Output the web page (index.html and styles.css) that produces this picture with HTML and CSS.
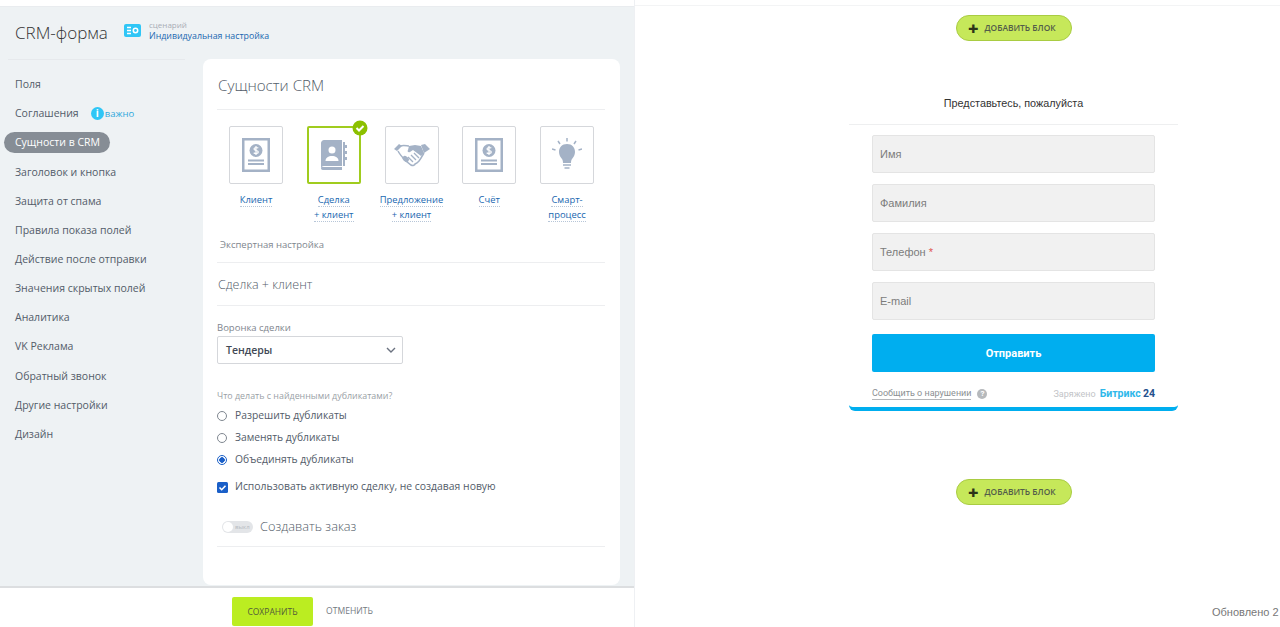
FILE: index.html
```html
<!DOCTYPE html>
<html lang="ru">
<head>
    <meta charset="UTF-8">
    <title>CRM-форма</title>
    <link rel="stylesheet" href="styles.css">
</head>
<body>
<div class="page">
    <div class="editor">
        <div class="editor-body">
            <div class="side">
                <div class="head">
                    <span class="head-title">CRM-форма</span>
                    <svg class="head-icon" width="17" height="13" viewBox="0 0 17 13">
                        <rect width="17" height="13" rx="2" fill="#2fc6f6"/>
                        <path d="M3 3.500h4M3 6.500h4M3 9.500h4" stroke="#fff" stroke-width="1.400"/>
                        <circle cx="11.500" cy="6.500" r="2.200" fill="none" stroke="#fff" stroke-width="1.500"/>
                    </svg>
                    <div class="head-text">
                        <div class="head-small">сценарий</div>
                        <div class="head-link">Индивидуальная настройка</div>
                    </div>
                </div>
                <ul class="menu">
                    <li><span>Поля</span></li>
                    <li><span>Соглашения</span><i class="info">i</i><b class="note">важно</b></li>
                    <li><span class="on">Сущности в CRM</span></li>
                    <li><span>Заголовок и кнопка</span></li>
                    <li><span>Защита от спама</span></li>
                    <li><span>Правила показа полей</span></li>
                    <li><span>Действие после отправки</span></li>
                    <li><span>Значения скрытых полей</span></li>
                    <li><span>Аналитика</span></li>
                    <li><span>VK Реклама</span></li>
                    <li><span>Обратный звонок</span></li>
                    <li><span>Другие настройки</span></li>
                    <li><span>Дизайн</span></li>
                </ul>
            </div>
            <div class="card">
                <h2 class="card-title">Сущности CRM</h2>
                <div class="tiles">
                    <div class="tile">
                        <div class="tile-box">
                            <svg width="28" height="34" viewBox="0 0 28 34">
                                <path fill-rule="evenodd" fill="#a4b2c6" d="M0 0h28v34H0zM2.500 2.500v29h23v-29z"/>
                                <circle cx="14" cy="12.500" r="6.500" fill="#a4b2c6"/>
                                <path d="M16.300 10.200c-1-1-4.300-1-4.300.8 0 2 4.300 1 4.300 3 0 1.800-3.400 1.800-4.600.7M14 8v9" fill="none" stroke="#fff" stroke-width="1.200"/>
                                <path d="M6 22.500h16M6 26h16" stroke="#a4b2c6" stroke-width="2"/>
                            </svg>
                        </div>
                        <div class="tile-name"><span>Клиент</span></div>
                    </div>
                    <div class="tile">
                        <div class="tile-box sel">
                            <svg width="26" height="31" viewBox="0 0 26 31">
                                <path fill="#a4b2c6" d="M3 0h18v26H3c-1.500 0-3 1-3 2.500V3c0-1.500 1.500-3 3-3z"/>
                                <path fill="#a4b2c6" d="M0 28c0-1.500 1.500-1 3-1h18v3H3c-1.500 0-3 0-3-2zM22 2h2v3h2v3h-2v3h2v3h-2v3h2v3h-2v6h-2z"/>
                                <circle cx="11" cy="10" r="3.500" fill="#fff"/>
                                <path fill="#fff" d="M4.500 21c0-3.500 3-5 6.500-5s6.500 1.500 6.500 5z"/>
                            </svg>
                            <svg class="tick" width="16" height="16" viewBox="0 0 16 16">
                                <circle cx="8" cy="8" r="7.500" fill="#8cc000"/>
                                <path d="M4.500 8l2.500 2.500 4.500-4.500" fill="none" stroke="#fff" stroke-width="2"/>
                            </svg>
                        </div>
                        <div class="tile-name"><span>Сделка</span><br><span>+ клиент</span></div>
                    </div>
                    <div class="tile">
                        <div class="tile-box">
                            <svg width="36" height="24" viewBox="0 0 36 24">
                                <path fill="#a4b2c6" d="M0 6l5-5 3 2-5 5zM36 6l-5-5-4 1 3 8z"/>
                                <path fill="none" stroke="#a4b2c6" stroke-width="1.500" d="M6 3c4-1 7 0 9 0M4 8c2 4 5 7 8 10l5 4c2 1 4 0 4-1l2-1 2-2 2-3 3-5"/>
                                <path fill="#a4b2c6" d="M15 3l6-1 6 1 3 7-3 3-8-6-3 2c-2 1-3-1-2-2z"/>
                                <path d="M14 14l5 5M17 12l5 5M20 10l5 5" stroke="#a4b2c6" stroke-width="1.300"/>
                                <rect x="8" y="13" width="7" height="5" rx="2.500" transform="rotate(40 11 16)" fill="#a4b2c6"/>
                            </svg>
                        </div>
                        <div class="tile-name"><span>Предложение</span><br><span>+ клиент</span></div>
                    </div>
                    <div class="tile">
                        <div class="tile-box">
                            <svg width="28" height="34" viewBox="0 0 28 34">
                                <path fill-rule="evenodd" fill="#a4b2c6" d="M0 0h28v34H0zM2.500 2.500v29h23v-29z"/>
                                <circle cx="14" cy="12.500" r="6.500" fill="#a4b2c6"/>
                                <path d="M16.300 10.200c-1-1-4.300-1-4.300.8 0 2 4.300 1 4.300 3 0 1.800-3.400 1.800-4.600.7M14 8v9" fill="none" stroke="#fff" stroke-width="1.200"/>
                                <path d="M6 22.500h16M6 26h16" stroke="#a4b2c6" stroke-width="2"/>
                            </svg>
                        </div>
                        <div class="tile-name"><span>Счёт</span></div>
                    </div>
                    <div class="tile">
                        <div class="tile-box">
                            <svg width="30" height="34" viewBox="0 0 30 34">
                                <path fill="#a4b2c6" d="M15 6c5 0 8 3.500 8 8 0 3-1.500 5-3 7-.7 1-1 2-1 4h-8c0-2-.3-3-1-4-1.500-2-3-4-3-7 0-4.500 3-8 8-8z"/>
                                <path d="M11 27h8M12.500 30h5" stroke="#a4b2c6" stroke-width="1.500"/>
                                <path d="M15 0v3.500M6 3l2 3M24 3l-2 3M0 11l3.500 1M30 11l-3.500 1" stroke="#a4b2c6" stroke-width="1.500"/>
                            </svg>
                        </div>
                        <div class="tile-name"><span>Смарт-</span><br><span>процесс</span></div>
                    </div>
                </div>
                <div class="expert">Экспертная настройка</div>
                <h3 class="sub-title">Сделка + клиент</h3>
                <label class="cap">Воронка сделки</label>
                <div class="select">
                    <span>Тендеры</span>
                    <svg width="10" height="6" viewBox="0 0 10 6"><path d="M1 1l4 4 4-4" fill="none" stroke="#6b7280" stroke-width="1.400"/></svg>
                </div>
                <div class="cap cap-dup">Что делать с найденными дубликатами?</div>
                <div class="opt"><i class="radio"></i>Разрешить дубликаты</div>
                <div class="opt"><i class="radio"></i>Заменять дубликаты</div>
                <div class="opt"><i class="radio radio-on"></i>Объединять дубликаты</div>
                <div class="opt opt-check">
                    <svg class="check" width="11" height="11" viewBox="0 0 11 11">
                        <rect width="11" height="11" rx="1.500" fill="#1a5fc8"/>
                        <path d="M2.500 5.500l2.200 2.200 3.800-4" fill="none" stroke="#fff" stroke-width="1.600"/>
                    </svg>
                    Использовать активную сделку, не создавая новую
                </div>
                <div class="order">
                    <span class="toggle"><i></i><em>выкл</em></span>
                    <span class="order-name">Создавать заказ</span>
                </div>
            </div>
        </div>
        <div class="bottom">
            <a class="save">СОХРАНИТЬ</a>
            <a class="cancel">ОТМЕНИТЬ</a>
        </div>
    </div>
    <div class="preview">
        <a class="add"><b>+</b>ДОБАВИТЬ БЛОК</a>
        <div class="form">
            <div class="form-title">Представьтесь, пожалуйста</div>
            <div class="form-body">
                <div class="field">Имя</div>
                <div class="field">Фамилия</div>
                <div class="field">Телефон <s>*</s></div>
                <div class="field">E-mail</div>
                <div class="send">Отправить</div>
                <div class="form-foot">
                    <span class="report">Сообщить о нарушении</span>
                    <i class="help">?</i>
                    <span class="power">Заряжено <b>Битрикс</b> <strong>24</strong></span>
                </div>
            </div>
        </div>
        <a class="add add-bottom"><b>+</b>ДОБАВИТЬ БЛОК</a>
        <div class="updated">Обновлено 2</div>
    </div>
</div>
</body>
</html>
```

FILE: styles.css
```css
/* reset */
body,h2,h3,ul,li{margin:0;padding:0}
ul{list-style:none}
i,em{font-style:normal}
a{text-decoration:none}
body{height:627px;overflow:hidden;background:#fff;font:12px/1.5 "Open Sans","Noto Sans",sans-serif;color:#535c69}

.page {
    display: flex;
    height: 627px;
    overflow: hidden;
}

/* левая часть */
.editor {
    width: 635px;
    flex: none;
    display: flex;
    flex-direction: column;
    padding-top: 6px;
    box-sizing: border-box;
    border-right: 1px solid #eef0f3;
}
.editor-body {
    flex: 1;
    min-height: 0;
    display: flex;
    background: #eef2f4;
    border-top: 1px solid #e9ecef;
}
.side {
    width: 203px;
    flex: none;
}
.head {
    display: flex;
    align-items: center;
    width: 400px;
    height: 52px;
    padding-left: 15px;
}
.head-title {
    font-size: 17px;
    font-weight: 300;
    color: #333;
    width: 109px;
    flex: none;
    line-height: 58px;
}
.head-icon {
    flex: none;
    margin: -6px 8px 0 0;
}
.head-text {
    margin-top: -4px;
    flex: none;
}
.head-small {
    font-size: 8px;
    line-height: 10px;
    color: #a8adb4;
}
.head-link {
    font-size: 8.800px;
    line-height: 13px;
    color: #2067b0;
}
.menu {
    margin: 0 18px 0 8px;
    padding-top: 10px;
    border-top: 1px solid #e6e9ec;
}
.menu li {
    height: 29.170px;
    font-size: 10.500px;
    margin-left: -4px;
    display: flex;
    align-items: center;
    white-space: nowrap;
}
.menu li span {
    padding: 0 10px 0 11px;
    line-height: 21px;
    border-radius: 11px;
}
.menu li .on {
    background: #868d95;
    color: #fff;
}
.info {
    width: 13px;
    height: 13px;
    margin-left: 2px;
    border-radius: 50%;
    background: #2fc6f6;
    color: #fff;
    font-size: 10px;
    font-weight: 700;
    line-height: 13px;
    text-align: center;
}
.note {
    margin-left: 1px;
    font-size: 9.500px;
    font-weight: 400;
    color: #2fa8dc;
}

.card {
    width: 417px;
    flex: none;
    margin: 52px 0 1px;
    padding: 0 15px 0 14px;
    box-sizing: border-box;
    background: #fff;
    border-radius: 8px;
}
.card-title {
    height: 50px;
    line-height: 52px;
    font-size: 15.200px;
    font-weight: 300;
    color: #535c69;
    border-bottom: 1px solid #edeef0;
    padding-left: 1px;
}
.tiles {
    display: flex;
    gap: 23.750px;
    margin: 16px 0 0 12px;
}
.tile {
    width: 54px;
    text-align: center;
}
.tile-box {
    position: relative;
    height: 58px;
    display: flex;
    align-items: center;
    justify-content: center;
    box-sizing: border-box;
    border: 1px solid #d5d7db;
    border-radius: 2px;
}
.tile-box.sel {
    border: 2px solid #a0cc1e;
}
.tick {
    position: absolute;
    right: -9px;
    top: -8px;
}
.tile-name {
    margin: 8px -14px 0;
    font-size: 9.400px;
    line-height: 15px;
    color: #2067b0;
}
.tile-name span {
    border-bottom: 1px dotted #b7c6d8;
}
.expert {
    height: 33px;
    margin-top: 7px;
    padding-left: 3px;
    font-size: 9.500px;
    line-height: 32px;
    color: #80868e;
    border-bottom: 1px solid #edeef0;
}
.sub-title {
    height: 42px;
    line-height: 43px;
    font-size: 12.500px;
    font-weight: 300;
    color: #535c69;
    border-bottom: 1px solid #edeef0;
    padding-left: 1px;
}
.cap {
    display: block;
    margin-top: 15px;
    font-size: 9.500px;
    line-height: 14px;
    color: #80868e;
}
.select {
    display: flex;
    align-items: center;
    justify-content: space-between;
    width: 186px;
    height: 28px;
    margin-top: 1px;
    padding: 0 6px 0 8px;
    box-sizing: border-box;
    border: 1px solid #d5d7db;
    border-radius: 2px;
    font-size: 10.500px;
    font-weight: 600;
    color: #424956;
}
.select span {
    margin-top: 2px;
}
.cap-dup {
    margin: 25px 0 2px;
    font-size: 8.900px;
    color: #9a9fa6;
}
.opt {
    display: flex;
    align-items: center;
    height: 22px;
    font-size: 10.300px;
    color: #535c69;
}
.radio {
    width: 10px;
    height: 10px;
    flex: none;
    margin-right: 8px;
    box-sizing: border-box;
    border: 1px solid #7f8790;
    border-radius: 50%;
}
.radio-on {
    border-color: #1a5fc8;
    background: radial-gradient(circle, #1a5fc8 0 2.500px, #fff 3px);
}
.opt-check {
    margin-top: 5px;
    font-size: 10.400px;
}
.check {
    flex: none;
    margin-right: 7px;
}
.order {
    display: flex;
    align-items: center;
    height: 39px;
    margin-top: 9px;
    padding-left: 5px;
    border-bottom: 1px solid #edeef0;
}
.toggle {
    position: relative;
    width: 31px;
    height: 12px;
    margin-right: 7px;
    border-radius: 6px;
    background: #e3e5e8;
}
.toggle i {
    position: absolute;
    left: 1px;
    top: 1px;
    width: 10px;
    height: 10px;
    border-radius: 50%;
    background: #fff;
}
.toggle em {
    position: absolute;
    left: 13px;
    top: 0;
    font-size: 6px;
    line-height: 12px;
    color: #b6bbc1;
}
.order-name {
    font-size: 12.800px;
    font-weight: 300;
    color: #535c69;
}
.bottom {
    flex: none;
    display: flex;
    align-items: flex-start;
    height: 41px;
    padding: 9px 0 0 232px;
    background: #fff;
    border-top: 2px solid #dcdee0;
    box-sizing: border-box;
}
.save {
    width: 81px;
    height: 29px;
    margin-right: 13px;
    background: #bbed21;
    border-radius: 2px;
    font-size: 8.500px;
    line-height: 29px;
    text-align: center;
    color: #535c3a;
}
.cancel {
    font-size: 8.600px;
    line-height: 29px;
    color: #747a82;
}

/* правая часть */
.preview {
    flex: 1;
    min-width: 0;
    display: flex;
    flex-direction: column;
    overflow: hidden;
    height: 622px;
    margin-top: 5px;
    padding-top: 9px;
    box-sizing: border-box;
    border-top: 1px solid #f3f4f5;
}
.add {
    display: flex;
    align-items: center;
    width: 116px;
    height: 26px;
    margin-left: 321px;
    padding-left: 11px;
    box-sizing: border-box;
    background: #c6e85a;
    border: 1px solid #a9cc42;
    border-radius: 13px;
    font-size: 8.400px;
    font-weight: 600;
    color: #535c4a;
    flex: none;
}
.add b {
    margin-right: 6px;
    font-size: 18px;
    line-height: 20px;
    color: #2c3318;
}
.form {
    width: 329px;
    margin: 52px 0 0 214px;
    flex: none;
    border-bottom: 4px solid #00aeef;
    border-radius: 0 0 6px 6px;
}
.form-title {
    height: 31px;
    font: 10.800px/20px "Liberation Sans", sans-serif;
    text-align: center;
    color: #333;
    border-bottom: 1px solid #eeeff0;
}
.form-body {
    padding: 10px 23px 0;
}
.field {
    height: 38px;
    margin-bottom: 11px;
    padding-left: 7px;
    box-sizing: border-box;
    background: #f1f1f1;
    border: 1px solid #e4e4e4;
    border-radius: 2px;
    font: 11px/37px "Liberation Sans", sans-serif;
    color: #7c7c7c;
}
.field s {
    text-decoration: none;
    color: #e0564f;
}
.send {
    height: 38px;
    margin-top: 14px;
    background: #00aeef;
    border-radius: 2px;
    font: 700 11px/40px Roboto, sans-serif;
    text-align: center;
    color: #fff;
}
.form-foot {
    display: flex;
    align-items: center;
    height: 35px;
    padding-top: 8px;
    box-sizing: border-box;
    font: 9px/12px Roboto, sans-serif;
    color: #8b8f93;
}
.report {
    border-bottom: 1px solid #b5b7ba;
}
.help {
    width: 10px;
    height: 10px;
    margin-left: 6px;
    border-radius: 50%;
    background: #b6b9bc;
    color: #fff;
    font-size: 8px;
    font-weight: 700;
    line-height: 10px;
    text-align: center;
}
.power {
    margin-left: auto;
    color: #c2c4c7;
    white-space: nowrap;
}
.power b {
    margin-left: 2px;
    font-size: 10.500px;
    color: #2fb8ea;
}
.power strong {
    font-size: 10.500px;
    color: #24508c;
}
.add-bottom {
    margin-top: 68px;
}
.updated {
    margin: auto 0 7px 577px;
    font: 11px/16px "Liberation Sans", sans-serif;
    color: #777;
    white-space: nowrap;
}
```
